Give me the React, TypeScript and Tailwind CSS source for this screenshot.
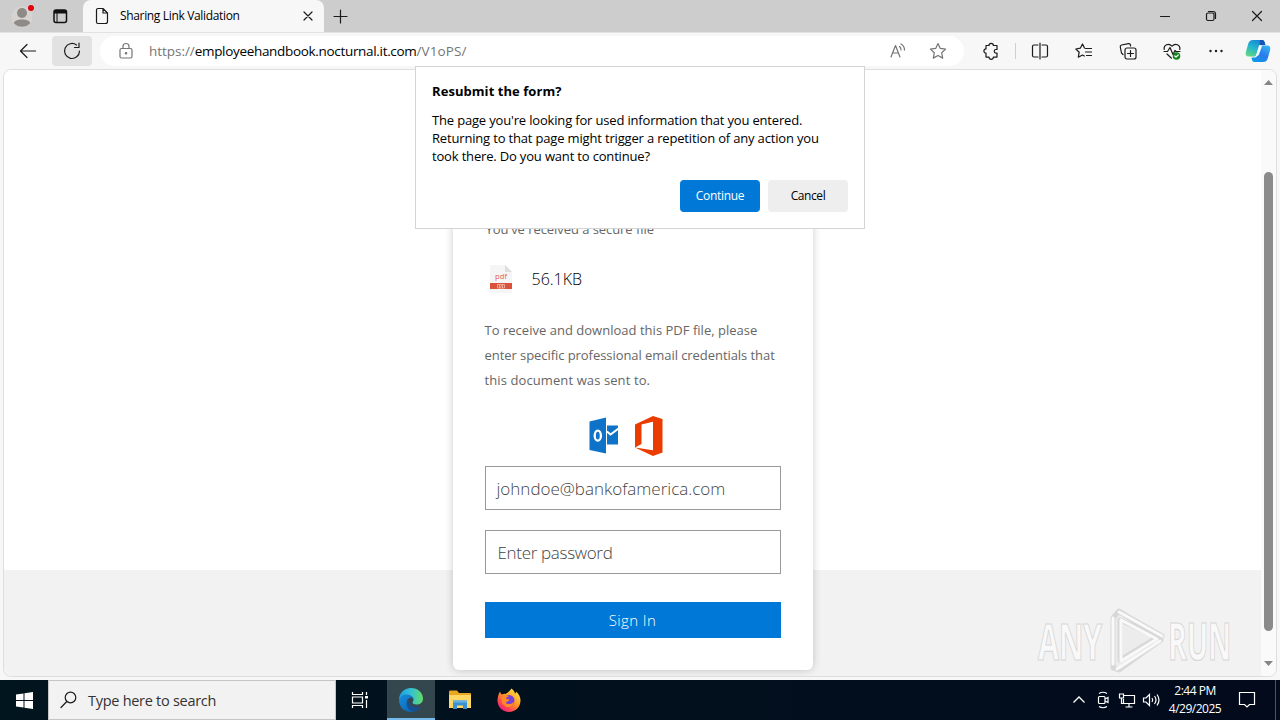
import type { ReactNode } from "react";

const iconProps = {
  fill: "none",
  stroke: "#1b1b1b",
  strokeWidth: 1.2,
  strokeLinecap: "round" as const,
  strokeLinejoin: "round" as const,
};

function TabBar() {
  return (
    <div className="flex h-8 items-center bg-[#cdcdcd]">
      <div className="flex w-[83px] items-center">
        <svg width="83" height="32" viewBox="0 0 83 32">
          <circle cx="22" cy="17" r="10.5" fill="#d6d3d0" />
          <circle cx="22" cy="13" r="5" fill="#8d8a88" />
          <path d="M14 23.5c0-3 3.500-4 8-4s8 1 8 4c-2 2-5 3.300-8 3.300s-6-1.300-8-3.300z" fill="#8d8a88" />
          <circle cx="31" cy="8" r="3" fill="#e3000b" />
          <rect x="54" y="10" width="12.500" height="12.500" rx="2" fill="none" stroke="#111" strokeWidth="1.500" />
          <path d="M54 13.500v-1.500a2 2 0 0 1 2-2h8.500a2 2 0 0 1 2 2v1.500z" fill="#111" />
          <path d="M57 13v9" stroke="#111" strokeWidth="1" />
        </svg>
      </div>
      <div className="flex h-8 w-[241px] items-center rounded-t-lg bg-[#f7f7f7] pl-3 pr-[10px]">
        <svg width="14" height="18" viewBox="0 0 14 18" {...iconProps}>
          <path d="M3 1.500h5l4.500 4.500v8.500a2 2 0 0 1-2 2H3a1.500 1.500 0 0 1-1.500-1.500V3A1.500 1.500 0 0 1 3 1.500zM8 1.500V6h4.500" />
        </svg>
        <span className="ml-[11px] flex-1 whitespace-nowrap text-[12px] tracking-[-0.34px] text-black">Sharing Link Validation</span>
        <svg width="12" height="12" viewBox="0 0 12 12" {...iconProps}>
          <path d="M2 2l8 8M10 2l-8 8" />
        </svg>
      </div>
      <svg className="ml-[9px]" width="15" height="15" viewBox="0 0 15 15" {...iconProps}>
        <path d="M1 7.500h13M7.500 1v13" />
      </svg>
      <div className="ml-auto flex">
        <svg width="46" height="32" viewBox="0 0 46 32" {...iconProps}>
          <path d="M18.500 16.500h9" />
        </svg>
        <svg width="46" height="32" viewBox="0 0 46 32" {...iconProps}>
          <rect x="18.500" y="13" width="7.500" height="7.500" rx="1.500" />
          <path d="M20.500 11.500h4.500a2.500 2.500 0 0 1 2.500 2.500v4.500" />
        </svg>
        <svg width="46" height="32" viewBox="0 0 46 32" {...iconProps}>
          <path d="M18.500 11.500l9 9M27.500 11.500l-9 9" />
        </svg>
      </div>
    </div>
  );
}

function ToolIcon({ children, muted }: { children: ReactNode; muted?: boolean }) {
  return (
    <svg width="20" height="20" viewBox="0 0 20 20" {...iconProps} stroke={muted ? "#757575" : "#1b1b1b"} className="shrink-0">
      {children}
    </svg>
  );
}

function Copilot() {
  return (
    <svg width="26" height="24" viewBox="0 0 26 24" className="shrink-0">
      <defs>
        <linearGradient id="copilotLeft" x1="0.700" y1="0" x2="0.200" y2="1">
          <stop offset="0" stopColor="#1685d8" />
          <stop offset="0.500" stopColor="#25b6cc" />
          <stop offset="1" stopColor="#62d884" />
        </linearGradient>
        <linearGradient id="copilotRight" x1="0.800" y1="0" x2="0.200" y2="1">
          <stop offset="0" stopColor="#33b5f3" />
          <stop offset="0.500" stopColor="#2b79ec" />
          <stop offset="1" stopColor="#0d9be8" />
        </linearGradient>
      </defs>
      <path d="M8 1h9c2 0 2.500 1.500 3 4h-3c-2 0-3 1-3.500 3l-2 7c-.5 2-1.500 2.500-3 2.500H4c-3 0-3.800-2-3-5l2-7C3.800 2.500 5 1 8 1z" fill="url(#copilotLeft)" />
      <path d="M15 1h2c2 0 2.500 1.500 3.500 5h-6z" fill="#1555b8" />
      <path d="M18 6.500h4c3 0 3.800 2 3 5l-2 7c-.8 3-2 4.500-5 4.500H9.500c-2 0-2.500-1.500-3-4.500H9c2 0 3-.5 3.500-2.500l2-7c.5-2 1.500-2.500 3.500-2.500z" fill="url(#copilotRight)" />
      <path d="M14.500 7h2.500l-3 8.500c-.4 1-1 1.300-2 1.300h-1z" fill="#f5fcff" />
    </svg>
  );
}

function Toolbar() {
  return (
    <div className="flex h-[37px] items-center border-t border-[#e2e2e2] bg-[#f7f7f7]">
      <svg className="ml-[19px]" width="18" height="18" viewBox="0 0 18 18" {...iconProps}>
        <path d="M16.500 9H1.500M8 2.500L1.500 9l6.500 6.500" />
      </svg>
      <div className="ml-[15px] flex h-[30px] w-10 items-center justify-center rounded bg-[#e2e2e2]">
        <svg width="20" height="20" viewBox="0 0 20 20" {...iconProps}>
          <path d="M17.500 10a7.500 7.500 0 1 1-3-6M17 2v4.500h-4.500" />
        </svg>
      </div>
      <div className="ml-2 flex h-[30px] w-[864px] items-center rounded-full bg-white pl-4 pr-4">
        <ToolIcon muted>
          <rect x="4" y="7.500" width="12" height="9.500" rx="1.500" />
          <path d="M7 7.500V5.500a3 3 0 0 1 6 0v2" />
          <circle cx="10" cy="12.200" r="0.700" fill="#757575" />
        </ToolIcon>
        <span className="ml-[13px] whitespace-nowrap text-[13.500px] tracking-[-0.04px] text-[#757575]">
          https://<span className="tracking-[-0.32px] text-black">employeehandbook.nocturnal.it.com</span>
          <span className="tracking-[0.12px]">/V1oPS/</span>
        </span>
        <div className="ml-auto flex gap-5">
          <ToolIcon muted>
            <path d="M3 16L7.500 4.500 12 16M4.500 12h6M11.500 5.500q1.500 1 1.500 3.500M13 3q3.500 2 3.500 6" />
          </ToolIcon>
          <ToolIcon muted>
            <path d="M10 2.500l2.300 4.900 5.300.7-3.900 3.700 1 5.300-4.700-2.600-4.700 2.600 1-5.300-3.900-3.700 5.300-.7z" />
          </ToolIcon>
        </div>
      </div>
      <div className="ml-[17px] flex items-center">
        <ToolIcon>
          <path d="M5 4.500h3a2.200 2.200 0 0 1 4.400 0h3.600v4h-1a1.800 1.800 0 0 0 0 3.600h1v4h-3.600a2.200 2.200 0 0 1-4.400 0H5v-4a2.100 2.100 0 0 1 0-4.200z" />
        </ToolIcon>
        <span className="ml-[14px] h-4 w-px bg-[#cfcfcf]" />
        <div className="ml-[14px] flex gap-6">
          <ToolIcon>
            <path d="M8 4H4a1.500 1.500 0 0 0-1.500 1.500v9A1.500 1.500 0 0 0 4 16h4M12 4h4a1.500 1.500 0 0 1 1.500 1.500v9A1.500 1.500 0 0 1 16 16h-4M10 2v16" />
          </ToolIcon>
          <ToolIcon>
            <path d="M10.500 7L8.500 3 6.300 7.200l-4.500.8 3.400 3.200-.9 5L8.500 14l1.800 1M11.500 7.500h6M11.500 11h6M12.500 14.500h5" />
          </ToolIcon>
          <ToolIcon>
            <rect x="7" y="7" width="11" height="11" rx="2" />
            <path d="M12.500 9.500v6M9.500 12.500h6M5 13.500l-1.500-1.500-1.200-6c-.2-1 .4-1.700 1.200-2l7-1.300c1-.2 1.700.3 2 1.300v1" />
          </ToolIcon>
          <ToolIcon>
            <path d="M2.200 8.500C1.500 4 6.500 1.500 10 5.200c3.500-3.700 8.500-1.200 7.800 3.300M2 10.500h3.500L8 6.500l3 7 2-4 1 1h4M5 13l4.500 4.200" />
            <circle cx="14.500" cy="15" r="3.800" fill="#13841b" stroke="none" />
            <path d="M12.800 15l1.200 1.200 2.200-2.200" stroke="#fff" />
          </ToolIcon>
          <ToolIcon>
            <g fill="#1b1b1b" stroke="none">
              <circle cx="4.500" cy="10" r="1.200" />
              <circle cx="10" cy="10" r="1.200" />
              <circle cx="15.500" cy="10" r="1.200" />
            </g>
          </ToolIcon>
        </div>
      </div>
      <div className="ml-[19px]">
        <Copilot />
      </div>
    </div>
  );
}

function ResubmitDialog() {
  return (
    <div className="absolute left-[415px] top-[66px] h-[163px] w-[450px] border border-[#d4d4d4] bg-white px-4 pt-[15px] text-[13px] leading-[18px] text-black">
      <h2 className="whitespace-nowrap font-bold tracking-[0.06px]">Resubmit the form?</h2>
      <p className="mt-[11px] whitespace-nowrap tracking-[-0.17px]">
        The page you're looking for used information that you entered.
        <br />
        Returning to that page might trigger a repetition of any action you
        <br />
        took there. Do you want to continue?
      </p>
      <div className="mt-[15px] flex justify-end gap-2 text-[12px]">
        <button className="h-8 w-20 rounded bg-[#0078d7] tracking-[-0.3px] text-white">Continue</button>
        <button className="h-8 w-20 rounded bg-[#eeeeee] tracking-[-0.4px]">Cancel</button>
      </div>
    </div>
  );
}

function PdfIcon() {
  return (
    <svg width="24" height="30" viewBox="0 0 24 30">
      <path d="M1 0h15l7 7v21H1z" fill="#f6f5f5" />
      <path d="M16 0l7 7h-7z" fill="#dedcdc" />
      <text x="6" y="14" fontSize="7.500" fill="#e2604c" textLength="12">pdf</text>
      <rect x="1" y="18" width="22" height="6" fill="#d9533a" />
      <path d="M8.500 19.500h7v3.500h-7zM10.500 19.500v3.500l3-3.500v3.500" fill="none" stroke="#f5b8ac" strokeWidth="0.800" />
    </svg>
  );
}

function OutlookLogo() {
  return (
    <svg width="30" height="38" viewBox="0 0 30 38">
      <path d="M18 8.500h11v19H18z" fill="#0f72c9" />
      <path d="M18 14.500l3.500 3L29.500 11.500" fill="none" stroke="#fff" strokeWidth="2" />
      <path d="M.500 4.500L17 .500v36L.500 33z" fill="#0f72c9" />
      <ellipse cx="8.800" cy="18.700" rx="3.100" ry="5" fill="none" stroke="#fff" strokeWidth="2.300" />
    </svg>
  );
}

function OfficeLogo() {
  return (
    <svg width="28" height="40" viewBox="0 0 28 40">
      <path d="M0 8.500L18 0l9.500 3v33.500L18 40 0 31.500l18 2.800V5.700L6.500 8.500v19.500L0 31.500z" fill="#eb3c00" />
    </svg>
  );
}

function SignInCard() {
  return (
    <div className="mt-6 flex h-[576px] w-[360px] shrink-0 flex-col rounded-md bg-white px-8 pt-[123px] shadow-[0_0_8px_rgba(0,0,0,0.2)]">
      <p className="h-[25px] whitespace-nowrap pl-px text-[13px] leading-[25px] tracking-[-0.06px] text-[#666]">You've received a secure file</p>
      <div className="mt-[23px] flex h-[30px] items-center gap-[19px] pl-1">
        <PdfIcon />
        <span className="pb-[2px] text-[16px] font-light text-black">56.1KB</span>
      </div>
      <p className="mt-[23px] whitespace-nowrap text-[13px] leading-[25px] tracking-[-0.03px] text-[#666]">
        <span className="tracking-[0.02px]">To receive and download this PDF file, please</span>
        <br />
        <span className="tracking-[-0.06px]">enter specific professional email credentials that</span>
        <br />
        <span className="tracking-[0.1px]">this document was sent to.</span>
      </p>
      <div className="mt-[23px] flex h-10 items-center gap-4 pl-[104px]">
        <OutlookLogo />
        <OfficeLogo />
      </div>
      <div className="mt-[10px] flex h-11 shrink-0 items-center border border-[#999] px-[11px] pt-0.5 text-[17px] font-light text-[#444]">
        johndoe@bankofamerica.com
      </div>
      <div className="mt-5 flex h-11 shrink-0 items-center border border-[#999] pl-3 pt-0.5 text-[17px] font-light tracking-[-0.32px] text-[#444]">
        Enter password
      </div>
      <button className="mt-7 h-9 shrink-0 bg-[#0078d7] text-[15px] font-light tracking-[0.4px] text-white">Sign In</button>
    </div>
  );
}

function Watermark() {
  return (
    <svg className="absolute left-[1034px] top-[600px]" width="246" height="80" viewBox="0 -6 246 80">
      <g fontFamily="'Open Sans', sans-serif" fontWeight="700" fontSize="51" fill="#f9f9f9" stroke="#d6d6d6" strokeWidth="1.200">
        <text transform="translate(4 54) scale(0.6 1)" textLength="107">ANY</text>
        <text transform="translate(134 54) scale(0.56 1)" textLength="113">RUN</text>
      </g>
      <g fill="none" strokeLinejoin="round" strokeLinecap="round">
        <path d="M79 12v50l6 2 42-30L85 5z" fill="#ececec" stroke="#d8d8d8" strokeWidth="5" />
        <path d="M86 6l42 24M86 14v40l38-23z" stroke="#d8d8d8" strokeWidth="5" />
        <path d="M79 12v46M85 6l43 24M87 14v41l36-22zM83 63l43-28" stroke="#f9f9f9" strokeWidth="3" />
      </g>
    </svg>
  );
}

function PageView() {
  return (
    <div className="mx-[3px] flex h-[608px] overflow-hidden rounded-lg border border-[#dedede]">
      <div className="flex flex-1 justify-center bg-[linear-gradient(#ffffff_500px,#f2f2f2_500px)]">
        <SignInCard />
      </div>
      <div className="flex w-[15px] flex-col items-center bg-[#fafafa] py-[10px]">
        <svg width="9" height="5" viewBox="0 0 9 5">
          <path d="M0 5L4.500 0 9 5z" fill="#858585" />
        </svg>
        <div className="mt-[87px] h-[459px] w-[9px] rounded-full bg-[#8b8b8b]" />
        <svg className="mt-[30px]" width="9" height="5" viewBox="0 0 9 5">
          <path d="M0 0h9L4.500 5z" fill="#858585" />
        </svg>
      </div>
    </div>
  );
}

function EdgeLogo() {
  return (
    <svg width="24" height="24" viewBox="0 0 24 24">
      <defs>
        <linearGradient id="edgeTop" x1="0" y1="0.500" x2="1" y2="0.500">
          <stop offset="0" stopColor="#1c9de0" />
          <stop offset="0.500" stopColor="#35c1d4" />
          <stop offset="1" stopColor="#62dc63" />
        </linearGradient>
        <linearGradient id="edgeBody" x1="0" y1="0" x2="1" y2="1">
          <stop offset="0" stopColor="#168fe0" />
          <stop offset="1" stopColor="#0c59a4" />
        </linearGradient>
      </defs>
      <path d="M0 12C0 5 5 0 12 0s12 5 12 10.500c0 4-3 6-6.500 6-2.500 0-4-1-4-2 0-.7 1-1.200 1-3 0-2.500-2.500-4-5.500-4S1 9 0 12z" fill="url(#edgeTop)" />
      <path d="M0 12c1-4 5-6 8.500-5.500C12 7 14.500 9 14.500 11.500c-1-1.500-2.500-2-4-1.500-3 1.500-3.500 6 0 9.500 2.500 2.300 6 2.300 10 .5C18.500 22.500 15.500 24 12 24 5 24 0 19 0 12z" fill="url(#edgeBody)" />
      <path d="M9 11.500c-3 3.500-1 10 4 12 4-.3 6.500-2 8.500-4.500.3-.6 0-.9-.6-.6C15 21 9.500 17.500 9 11.500z" fill="#174f93" />
    </svg>
  );
}

function FolderIcon() {
  return (
    <svg width="22" height="20" viewBox="0 0 22 20">
      <path d="M0 2c0-1 .5-1.500 1.500-1.500H8L10 3h11c.6 0 1 .4 1 1v14H0z" fill="#e9a820" />
      <path d="M0 5h22v13H0z" fill="#ffd765" />
      <path d="M4 10.500h14V19h-4v-3.500H8V19H4z" fill="#3b91cf" />
      <path d="M4 10.500h14v2H4z" fill="#62b4e8" />
    </svg>
  );
}

function FirefoxLogo() {
  return (
    <svg width="24" height="24" viewBox="0 0 24 24">
      <defs>
        <linearGradient id="foxFire" x1="0.900" y1="0.100" x2="0.200" y2="1">
          <stop offset="0" stopColor="#ffe145" />
          <stop offset="0.450" stopColor="#ff9526" />
          <stop offset="0.750" stopColor="#ff4752" />
          <stop offset="1" stopColor="#e31587" />
        </linearGradient>
      </defs>
      <path d="M3 3.500c.5 1.500 1 2.500 2 3 1-.6 2-.8 3.500-.6C10.500 5 13 3 14.500.500c2 1.500 3 3 3.500 5 .8-.4 1-1 1-2C22 6 23.500 9 23.500 12.500 23.500 19 18.500 24 12 24S.500 19 .500 12.500C.500 9 1.500 6 3 3.500z" fill="url(#foxFire)" />
      <circle cx="12" cy="12.500" r="5.500" fill="#7542d4" />
      <path d="M5 9c2-2 5-2.500 7-.5-2 .3-3 1-3 2 1 1 3 .5 3.500 1.200-.7 1.800-3 2-4 3 2 2 6 2 8.500-1-1 5-5 6-8 5-3.500-1.200-5.500-5.500-4-9.700z" fill="#ff8a28" />
    </svg>
  );
}

function Taskbar() {
  return (
    <div className="flex h-10 items-center bg-[linear-gradient(90deg,#01151e,#020a1c)] text-white">
      <div className="flex w-12 justify-center">
        <svg width="17" height="17" viewBox="0 0 17 17" fill="#fff">
          <path d="M0 2.500l7.500-1V8H0zM8.500 1.300L17 0v8H8.500zM0 9h7.500v6.500l-7.500-1zM8.500 9H17v8l-8.500-1.300z" />
        </svg>
      </div>
      <div className="flex h-10 w-72 items-center border border-[#c5c5c5] bg-[#f2f2f2] pl-[11px]">
        <svg width="18" height="18" viewBox="0 0 18 18" {...iconProps}>
          <circle cx="10.500" cy="6.500" r="5.300" />
          <path d="M6.800 10.500L1 16.500" />
        </svg>
        <span className="ml-[10px] whitespace-nowrap pt-[2px] text-[14.500px] tracking-[-0.28px] text-[#333]">Type here to search</span>
      </div>
      <div className="flex w-[51px] justify-center pr-[3px]">
        <svg width="18" height="18" viewBox="0 0 18 18" fill="none" stroke="#fff" strokeWidth="1.200">
          <path d="M1.500 1v2.500h10V1M1.500 17v-2.500h10V17M1.500 6h10v6h-10zM15.500 1v3M15.500 9v8" />
          <path d="M14 5h3v2.500h-3z" fill="#fff" stroke="none" />
        </svg>
      </div>
      <div className="flex h-10 w-12 items-center justify-center border-b-2 border-[#76b9ed] bg-[#34474f] pt-0.5">
        <EdgeLogo />
      </div>
      <div className="flex w-[49px] justify-center">
        <FolderIcon />
      </div>
      <div className="flex w-[49px] justify-center">
        <FirefoxLogo />
      </div>
      <div className="ml-auto flex h-10 items-center">
        <svg width="24" height="20" viewBox="0 0 24 20" fill="none" stroke="#fff" strokeWidth="1.300">
          <path d="M6.500 12.500L12 7l5.500 5.500" />
        </svg>
        <svg width="24" height="20" viewBox="0 0 24 20" fill="none" stroke="#fff" strokeWidth="1.200">
          <rect x="7.500" y="6.500" width="6.500" height="7" rx="1" />
          <path d="M14 9l3-1.500v5L14 11M8 3.500q4-2.500 8 0M8 16.500q4 2.500 8 0" />
        </svg>
        <svg width="24" height="20" viewBox="0 0 24 20" fill="none" stroke="#fff" strokeWidth="1.200">
          <path d="M9 5.500h10.500v8H8.500V9M14 13.500V17M10.500 17h7M4.500 4h4v4h-4zM6.500 8v5.500h2" />
        </svg>
        <svg width="24" height="20" viewBox="0 0 24 20" fill="none" stroke="#fff" strokeWidth="1.200">
          <path d="M4.500 8h2.500l3.500-3.500v11L7 12H4.500zM13 8q1.500 2 0 4M15.500 6q3 4 0 8M18 4.500q4 5.500 0 11" />
        </svg>
        <div className="ml-[5px] w-[54px] text-center text-[12px] leading-[18px] tracking-[-0.5px]">
          <div className="whitespace-nowrap">2:44 PM</div>
          <div className="whitespace-nowrap">4/29/2025</div>
        </div>
        <svg className="ml-[15px]" width="20" height="20" viewBox="0 0 20 20" fill="none" stroke="#fff" strokeWidth="1.200">
          <path d="M2.500 2.500h15v12h-5L10 17l-2.500-2.500h-5z" />
        </svg>
        <span className="ml-[18px] mr-1 h-10 w-px bg-[#4d5562]" />
      </div>
    </div>
  );
}

export default function App() {
  return (
    <div className="relative flex h-[720px] w-[1280px] flex-col overflow-hidden bg-[#f7f7f7] font-['Open_Sans','Noto_Sans',sans-serif]">
      <TabBar />
      <Toolbar />
      <PageView />
      <div className="h-[3px]" />
      <Taskbar />
      <ResubmitDialog />
      <Watermark />
    </div>
  );
}
